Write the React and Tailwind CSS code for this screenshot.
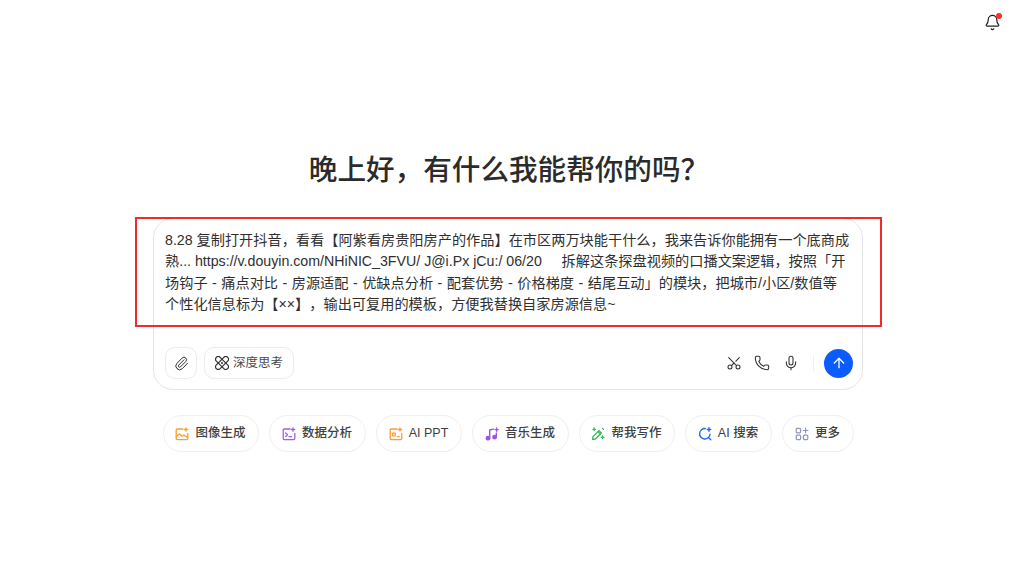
import React from 'react';
import { ArrowUp, Bell, Mic, Paperclip, Phone, Scissors } from 'lucide-react';

const ImageIcon = () => (
    <svg width="14" height="14" viewBox="0 0 14 14" fill="none" stroke="#fb9d2f" strokeWidth="1.3" strokeLinecap="round" strokeLinejoin="round">
        <path d="M8 2H2.2a1 1 0 0 0-1 1v8.6a1 1 0 0 0 1 1h9.6a1 1 0 0 0 1-1V6.5" />
        <path d="M1.4 9.6 4.6 7l2.6 2.2 1.8-1.2 3.6 2.6" />
        <path d="M11 .8v3.4M9.3 2.5h3.4" />
    </svg>
);

const DataIcon = () => (
    <svg width="14" height="14" viewBox="0 0 14 14" fill="none" stroke="#a25de8" strokeWidth="1.3" strokeLinecap="round" strokeLinejoin="round">
        <path d="M8 2H2.2a1 1 0 0 0-1 1v8.6a1 1 0 0 0 1 1h9.6a1 1 0 0 0 1-1V6.5" />
        <path d="m3.6 6 2 1.7-2 1.7M7 9.6h2.6" />
        <path d="M11 .8v3.4M9.3 2.5h3.4" />
    </svg>
);

const PptIcon = () => (
    <svg width="14" height="14" viewBox="0 0 14 14" fill="none" stroke="#fb9d2f" strokeWidth="1.3" strokeLinecap="round" strokeLinejoin="round">
        <path d="M8 2H2.2a1 1 0 0 0-1 1v8.6a1 1 0 0 0 1 1h9.6a1 1 0 0 0 1-1V6.5" />
        <path d="M3.6 6.2h2.6v2.6H3.6zM8.2 9.6h2" />
        <path d="M11 .8v3.4M9.3 2.5h3.4" />
    </svg>
);

const MusicIcon = () => (
    <svg width="14" height="14" viewBox="0 0 14 14" fill="none" stroke="#9a55e6" strokeWidth="1.4" strokeLinecap="round" strokeLinejoin="round">
        <circle cx="3" cy="11.2" r="1.7" fill="#9a55e6" />
        <circle cx="9.6" cy="10.2" r="1.7" fill="#9a55e6" />
        <path d="M4.7 11V3l3.8-.9M11.3 10V6" />
        <path d="M11.6 1v3.2M10 2.6h3.2" />
    </svg>
);

const WriteIcon = () => (
    <svg width="14" height="14" viewBox="0 0 14 14" fill="none" stroke="#35b85a" strokeWidth="1.3" strokeLinecap="round" strokeLinejoin="round">
        <path d="M1.6 12.4 2 9.6l6-6 2.4 2.4-6 6z" />
        <path d="m7 4.6 2.4 2.4" />
        <path d="M3.2 1v2.6M1.9 2.3h2.6M11.6 9v2.6M10.3 10.3h2.6M11.5 1.4l1 1" />
    </svg>
);

const SearchIcon = () => (
    <svg width="14" height="14" viewBox="0 0 14 14" fill="none" stroke="#2468f2" strokeWidth="1.4" strokeLinecap="round" strokeLinejoin="round">
        <path d="M7.4 1.6a5.2 5.2 0 1 0 4.6 5.6" />
        <path d="m10.4 10.4 2.4 2.4" />
        <path d="M11 .8v3.4M9.3 2.5h3.4" />
    </svg>
);

const MoreIcon = () => (
    <svg width="14" height="14" viewBox="0 0 14 14" fill="none" stroke="#8f97b8" strokeWidth="1.2" strokeLinecap="round" strokeLinejoin="round">
        <rect x="1.2" y="1.4" width="4.4" height="4.4" rx="1" />
        <rect x="1.2" y="8.2" width="4.4" height="4.4" rx="1" />
        <rect x="8.4" y="8.2" width="4.4" height="4.4" rx="1" />
        <path d="M10.6 1.2v4.6M8.3 3.5h4.6" />
    </svg>
);

const ThinkIcon = () => (
    <svg width="14" height="14" viewBox="0 0 14 14" fill="none" stroke="#333333" strokeWidth="1.2">
        <rect x="-1" y="4.3" width="16" height="5.4" rx="2.7" transform="rotate(45 7 7)" />
        <rect x="-1" y="4.3" width="16" height="5.4" rx="2.7" transform="rotate(-45 7 7)" />
        <circle cx="7" cy="7" r="1" fill="#333333" stroke="none" />
    </svg>
);

const chips = [
    { label: '图像生成', icon: <ImageIcon />, width: 'w-[96px]' },
    { label: '数据分析', icon: <DataIcon />, width: 'w-[97px]' },
    { label: 'AI PPT', icon: <PptIcon />, width: 'w-[86px]' },
    { label: '音乐生成', icon: <MusicIcon />, width: 'w-[97px]' },
    { label: '帮我写作', icon: <WriteIcon />, width: 'w-[96px]' },
    { label: 'AI 搜索', icon: <SearchIcon />, width: 'w-[87px]' },
    { label: '更多', icon: <MoreIcon />, width: 'w-[72px]' },
];

const App = () => {
    return (
        <div className="relative flex h-[565px] w-[1024px] flex-col items-center overflow-hidden bg-white pr-[8px] font-['Liberation_Sans','Noto_Sans_CJK_SC',sans-serif] text-[#262626] [text-spacing-trim:space-all]">
            <div className="flex w-full justify-end pr-[15px] pt-[14px]">
                <div className="relative">
                    <Bell size={17} strokeWidth={1.7} className="text-[#222222]" />
                    <span className="absolute right-[-1px] top-[-1px] h-[6px] w-[6px] rounded-full bg-[#f5312d]" />
                </div>
            </div>

            <h1 className="ml-[2px] mt-[120px] text-[28.6px] font-medium leading-[38px] text-[#2b2b2b]">晚上好，有什么我能帮你的吗？</h1>

            <div className="relative mt-[29px] flex h-[172px] w-[710px] flex-col rounded-[20px] border border-[#e5e5e5] bg-white pb-[10px] pl-[11px] pr-[9px] pt-[11px]">
                <p className="h-[112px] whitespace-nowrap text-[14.2px] leading-[21.4px] text-[#2f2f2f]">
                    8.28 复制打开抖音，看看【阿紫看房贵阳房产的作品】在市区两万块能干什么，我来告诉你能拥有一个底商成<br />
                    熟... https://v.douyin.com/NHiNIC_3FVU/ J@i.Px jCu:/ 06/20{'\u00a0\u00a0\u00a0\u00a0\u00a0'}拆解这条探盘视频的口播文案逻辑，按照「开<br />
                    <span className="[word-spacing:0.55px]">场钩子 - 痛点对比 - 房源适配 - 优缺点分析 - 配套优势 - 价格梯度 - 结尾互动」的模块，把城市/小区/数值等</span><br />
                    个性化信息标为【××】，输出可复用的模板，方便我替换自家房源信息~
                </p>
                <div className="mt-auto flex items-center justify-between">
                    <div className="flex items-center gap-[7px]">
                        <div className="flex h-[32px] w-[32px] items-center justify-center rounded-[10px] border border-[#ececec]">
                            <Paperclip size={15} strokeWidth={1.6} className="text-[#333333]" />
                        </div>
                        <div className="flex h-[32px] items-center gap-[4px] rounded-[10px] border border-[#ececec] px-[10px] text-[12.5px] text-[#4a4a4a]">
                            <ThinkIcon />
                            <span>深度思考</span>
                        </div>
                    </div>
                    <div className="flex items-center">
                        <Scissors size={16} strokeWidth={1.6} className="-rotate-90 text-[#333333]" />
                        <Phone size={16} strokeWidth={1.6} className="ml-[12px] text-[#333333]" />
                        <Mic size={16} strokeWidth={1.6} className="ml-[13px] text-[#333333]" />
                        <div className="ml-[14px] h-[16px] w-px bg-[#f0f0f0]" />
                        <div className="ml-[10px] flex h-[29px] w-[29px] items-center justify-center rounded-full bg-[#0b5cff]">
                            <ArrowUp size={16} strokeWidth={2} className="text-white" />
                        </div>
                    </div>
                </div>
            </div>

            <div className="mt-[25px] flex items-center gap-[10px]">
                {chips.map((chip) => (
                    <div
                        key={chip.label}
                        className={`flex h-[37px] items-center justify-center gap-[6px] rounded-full border border-[#efefef] text-[12.5px] font-medium text-[#404040] ${chip.width}`}
                    >
                        {chip.icon}
                        <span>{chip.label}</span>
                    </div>
                ))}
            </div>

            <div className="pointer-events-none absolute left-[135px] top-[217px] h-[110px] w-[747px] border-2 border-[#f02b2b]" />
        </div>
    );
};

export default App;
